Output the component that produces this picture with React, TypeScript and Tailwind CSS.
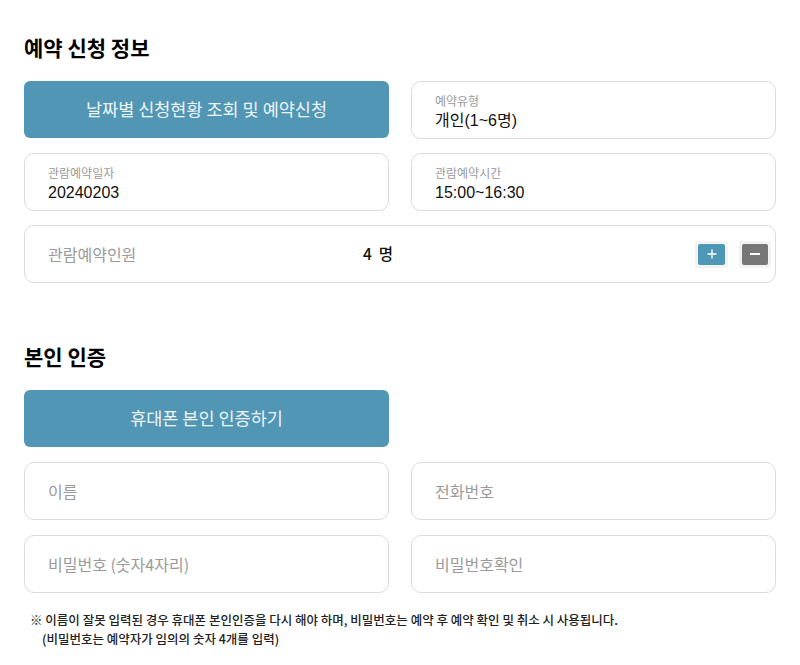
import React from "react";

const font = { fontFamily: '"Noto Sans CJK KR", "Noto Sans", sans-serif' };

function LabeledBox({ label, value }: { label: string; value: string }) {
  return (
    <div className="h-[58px] rounded-[10px] border border-[#dcdcdc] bg-white pl-[23px] pt-[5px] flex flex-col justify-center gap-[3px]">
      <div className="text-[12px] leading-[14px] text-[#9a9a9a]">{label}</div>
      <div className="text-[16px] leading-[20px] text-[#111]" style={{ fontFamily: '"Liberation Sans", "Noto Sans CJK KR", sans-serif' }}>
        {value}
      </div>
    </div>
  );
}

function InputBox({ placeholder }: { placeholder: string }) {
  return (
    <div className="h-[58px] rounded-[10px] border border-[#dcdcdc] bg-white pl-[23px] flex items-center">
      <span className="text-[16px] text-[#9a9a9a]">{placeholder}</span>
    </div>
  );
}

function BlueButton({ children }: { children: React.ReactNode }) {
  return (
    <div className="h-[57px] rounded-[6px] bg-[#5196b4] flex items-center justify-center text-[17.5px] text-[#eef5f8]">
      {children}
    </div>
  );
}

export default function App() {
  return (
    <div className="w-[800px] h-[665px] bg-white px-[24px] pt-[33px]" style={font}>
      <h2 className="text-[21px] leading-[28px] font-bold text-black">예약 신청 정보</h2>
      <div className="mt-[20px] grid grid-cols-2 gap-x-[22px] gap-y-[14px]">
        <BlueButton>날짜별 신청현황 조회 및 예약신청</BlueButton>
        <LabeledBox label="예약유형" value="개인(1~6명)" />
        <LabeledBox label="관람예약일자" value="20240203" />
        <LabeledBox label="관람예약시간" value="15:00~16:30" />
        <div className="col-span-2 h-[58px] rounded-[10px] border border-[#dcdcdc] bg-white pl-[23px] pr-[3px] flex items-center">
          <span className="w-[315px] text-[16px] text-[#9a9a9a]">관람예약인원</span>
          <span className="text-[15.5px] text-[#111] font-medium">4&nbsp;&nbsp;명</span>
          <div className="ml-auto mr-[1px] flex gap-[11px]">
            <div className="p-[3px] bg-[#f3f3f3] rounded-[2px]">
              <div className="w-[27px] h-[21px] bg-[#4f97b7] rounded-[2px] flex items-center justify-center">
                <svg width="10" height="10" viewBox="0 0 10 10">
                  <path d="M5 0.5V9.5M0.5 5H9.5" stroke="white" strokeWidth="1.4" />
                </svg>
              </div>
            </div>
            <div className="p-[3px] bg-[#f3f3f3] rounded-[2px]">
              <div className="w-[26px] h-[21px] bg-[#777777] rounded-[2px] flex items-center justify-center">
                <div className="w-[10px] h-[2px] bg-white" />
              </div>
            </div>
          </div>
        </div>
      </div>

      <h2 className="mt-[59px] text-[21px] leading-[28px] font-bold text-black">본인 인증</h2>
      <div className="mt-[20px] grid grid-cols-2 gap-x-[22px] gap-y-[15px]">
        <BlueButton>휴대폰 본인 인증하기</BlueButton>
        <div className="hidden" />
        <div className="col-start-1">
          <InputBox placeholder="이름" />
        </div>
        <InputBox placeholder="전화번호" />
        <InputBox placeholder="비밀번호 (숫자4자리)" />
        <InputBox placeholder="비밀번호확인" />
      </div>

      <div className="mt-[17px] pl-[6px] text-[12.5px] leading-[19px] text-[#222] font-medium">
        <div>※ 이름이 잘못 입력된 경우 휴대폰 본인인증을 다시 해야 하며, 비밀번호는 예약 후 예약 확인 및 취소 시 사용됩니다.</div>
        <div className="pl-[12px]">(비밀번호는 예약자가 임의의 숫자 4개를 입력)</div>
      </div>
    </div>
  );
}
